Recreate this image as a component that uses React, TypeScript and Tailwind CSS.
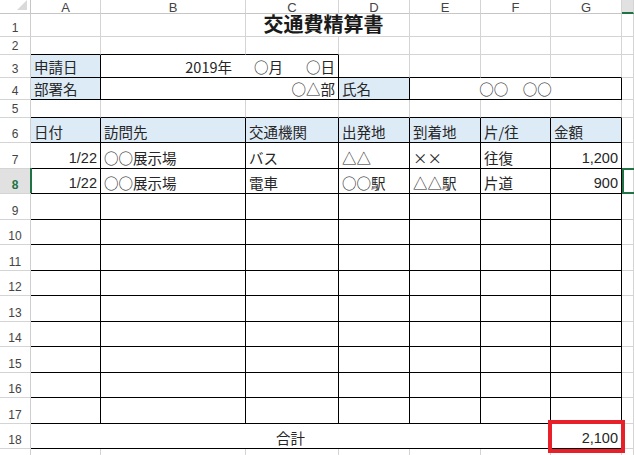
import React from 'react'

const CJK = "font-['Noto_Sans_CJK_JP',sans-serif]"
const LAT = "font-['Liberation_Sans','Noto_Sans_CJK_JP',sans-serif]"

type Edge = 'grid' | 'black'

function Cell({
  span = 1,
  right = 'grid',
  bottom = 'grid',
  blue = false,
  align = 'left',
  num = false,
  children,
  overlay,
}: {
  span?: number
  right?: Edge
  bottom?: Edge
  blue?: boolean
  align?: 'left' | 'right' | 'center'
  num?: boolean
  children?: React.ReactNode
  overlay?: React.ReactNode
}) {
  const spanCls =
    span === 2 ? 'col-span-2' : span === 3 ? 'col-span-3' : span === 6 ? 'col-span-6' : 'col-span-1'
  const rCls = right === 'black' ? 'border-r-black' : 'border-r-[#d4d4d4]'
  const bCls = bottom === 'black' ? 'border-b-black' : 'border-b-[#d4d4d4]'
  const aCls = align === 'right' ? 'justify-end' : align === 'center' ? 'justify-center' : 'justify-start'
  return (
    <div
      className={`relative flex items-end border-r border-b ${spanCls} ${rCls} ${bCls} ${aCls} ${
        blue ? 'bg-[#ddebf7]' : 'bg-white'
      } px-[3px] pb-[3px] text-[14.5px] leading-none whitespace-pre text-[#262626] ${num ? LAT : CJK}`}
    >
      {children}
      {overlay}
    </div>
  )
}

function RowHead({ n, selected = false }: { n?: number; selected?: boolean }) {
  return (
    <div
      className={`flex items-end justify-center border-r border-b border-r-[#cfcfcf] border-b-[#d4d4d4] pb-[2px] text-[12px] leading-none ${LAT} ${
        selected ? 'bg-[#e1e1e1] font-bold text-[#217346]' : 'bg-white text-[#444]'
      }`}
    >
      {n}
    </div>
  )
}

function ColHead({ l, selected = false }: { l: string; selected?: boolean }) {
  return (
    <div
      className={`flex justify-center border-r border-r-[#d4d4d4] text-[13px] leading-none pt-[1px] ${LAT} ${
        selected ? 'border-b-2 border-b-[#217346] bg-[#e1e1e1]' : 'border-b border-b-[#c6c6c6] bg-white text-[#444]'
      }`}
    >
      {l}
    </div>
  )
}

const trips = [
  ['1/22', '○○展示場', 'バス', '△△', '××', '往復', '1,200'],
  ['1/22', '○○展示場', '電車', '○○駅', '△△駅', '片道', '900'],
]

export default function App() {
  const body = Array.from({ length: 11 }, (_, i) => trips[i] ?? ['', '', '', '', '', '', ''])

  return (
    <div className="w-[634px] h-[455px] overflow-hidden bg-white">
      <div className="grid grid-cols-[31px_70px_145px_93px_71px_71px_70px_71px_1fr] grid-rows-[14px_23px_18px_23px_22px_18px_25px_26px_25px_26px_25px_26px_25px_26px_25px_26px_25px_26px_25px_25px]">
        {/* column headers */}
        <div className="relative border-r border-b border-r-[#c6c6c6] border-b-[#c6c6c6] bg-white">
          <svg width="31" height="14" className="absolute left-0 top-0">
            <polygon points="27,0 27,10 17,10" fill="#dadada" />
          </svg>
        </div>
        {['A', 'B', 'C', 'D', 'E', 'F', 'G'].map((l) => (
          <ColHead key={l} l={l} />
        ))}
        <ColHead l="" selected />

        {/* 1: title */}
        <RowHead n={1} />
        <Cell />
        <Cell />
        <div className="col-span-2 flex items-end justify-center border-r border-b border-r-[#d4d4d4] border-b-[#d4d4d4] pr-[8px] pb-[2px] text-[20px] font-bold leading-none text-[#1a1a1a] font-['Noto_Sans_CJK_JP',sans-serif]">
          交通費精算書
        </div>
        <Cell />
        <Cell />
        <Cell />
        <Cell />

        {/* 2 */}
        <RowHead n={2} />
        <Cell bottom="black" />
        <Cell bottom="black" />
        <Cell bottom="black" />
        <Cell />
        <Cell />
        <Cell />
        <Cell />
        <Cell />

        {/* 3 */}
        <RowHead n={3} />
        <Cell blue right="black" bottom="black">
          申請日
        </Cell>
        <Cell span={2} right="black" bottom="black" align="right">
          <span>2019年</span>
          <span className="ml-[22px]">○月</span>
          <span className="ml-[23px]">○日</span>
        </Cell>
        <Cell bottom="black" />
        <Cell bottom="black" />
        <Cell bottom="black" />
        <Cell bottom="black" />
        <Cell />

        {/* 4 */}
        <RowHead n={4} />
        <Cell blue right="black" bottom="black">
          部署名
        </Cell>
        <Cell span={2} right="black" bottom="black" align="right">
          ○△部
        </Cell>
        <Cell blue right="black" bottom="black">
          氏名
        </Cell>
        <Cell span={3} right="black" bottom="black" align="center">
          ○○　○○
        </Cell>
        <Cell />

        {/* 5 */}
        <RowHead n={5} />
        {Array.from({ length: 7 }, (_, i) => (
          <Cell key={i} bottom="black" />
        ))}
        <Cell />

        {/* 6: table header */}
        <RowHead n={6} />
        {['日付', '訪問先', '交通機関', '出発地', '到着地', '片/往', '金額'].map((h) => (
          <Cell key={h} blue right="black" bottom="black">
            {h}
          </Cell>
        ))}
        <Cell />

        {/* 7-17 */}
        {body.map((r, i) => (
          <React.Fragment key={i}>
            <RowHead n={i + 7} selected={i === 1} />
            <Cell
              right="black"
              bottom="black"
              align="right"
              num
              overlay={
                i === 1 ? <div className="absolute -left-[1px] -top-[1px] bottom-0 w-[2px] bg-[#217346]" /> : null
              }
            >
              {r[0]}
            </Cell>
            <Cell right="black" bottom="black">
              {r[1]}
            </Cell>
            <Cell right="black" bottom="black">
              {r[2]}
            </Cell>
            <Cell right="black" bottom="black">
              {r[3]}
            </Cell>
            <Cell right="black" bottom="black">
              {r[4]}
            </Cell>
            <Cell right="black" bottom="black">
              {r[5]}
            </Cell>
            <Cell right="black" bottom="black" align="right" num>
              {r[6]}
            </Cell>
            <Cell
              overlay={
                i === 1 ? (
                  <div className="absolute left-0 -top-[1px] h-[26px] w-[16px] border-2 border-[#217346]" />
                ) : null
              }
            />
          </React.Fragment>
        ))}

        {/* 18: total */}
        <RowHead n={18} />
        <Cell span={6} bottom="black" align="center">
          合計
        </Cell>
        <Cell
          right="black"
          bottom="black"
          align="right"
          num
          overlay={
            <div className="absolute -left-[3px] -top-[4px] z-10 h-[33px] w-[77px] border-[4px] border-[#e8202a]" />
          }
        >
          2,100
        </Cell>
        <Cell />

        {/* 19, cut off by the window */}
        <RowHead />
        {Array.from({ length: 8 }, (_, i) => (
          <Cell key={i} />
        ))}
      </div>
    </div>
  )
}
